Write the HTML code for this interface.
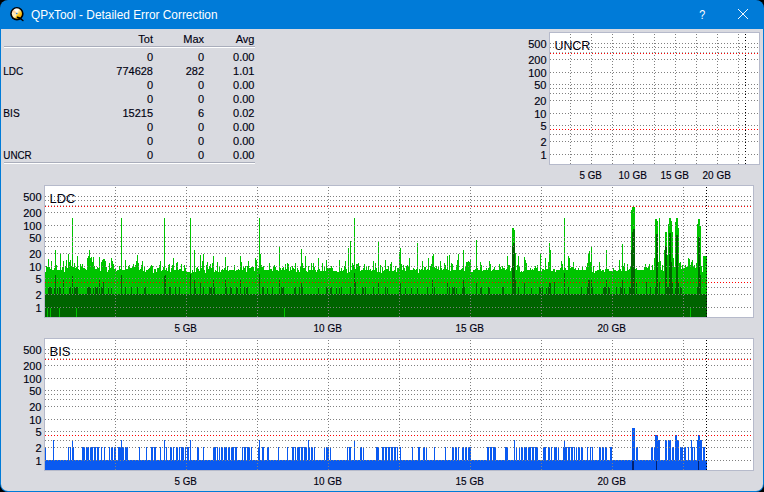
<!DOCTYPE html>
<html><head><meta charset="utf-8"><title>QPxTool - Detailed Error Correction</title>
<style>
html,body{margin:0;padding:0;background:#000;overflow:hidden}
svg{display:block}
text{font-family:"Liberation Sans",sans-serif;fill:#000010}
.t{font-size:11px;stroke:#000010;stroke-width:.15px}
.n{font-size:13px}
.w{font-size:12px;fill:#fff}
</style></head><body>
<svg width="764" height="492" viewBox="0 0 764 492">
<rect width="764" height="492" fill="#000"/>
<rect x="0" y="0" width="764" height="492" rx="8" ry="8" fill="#007bd8"/>
<path d="M1 29H763V484a7 7 0 0 1 -7 7H8a7 7 0 0 1 -7 -7z" fill="#d9dae0"/>

<g id="icon">
<defs><linearGradient id="cd" x1="0.15" y1="0.1" x2="0.85" y2="0.9"><stop offset="0" stop-color="#fff3e6"/><stop offset="0.45" stop-color="#ffe9a8"/><stop offset="0.7" stop-color="#ffc414"/><stop offset="1" stop-color="#f5a800"/></linearGradient></defs>
<circle cx="16.9" cy="13.7" r="6.7" fill="#000"/>
<circle cx="16.9" cy="13.6" r="5.1" fill="url(#cd)"/>
<path d="M16.9 13.6 L14.2 9.3 A5.1 5.1 0 0 1 19 9z" fill="#fff" opacity=".8"/>
<path d="M16.9 13.6 L12.6 16.3 A5.1 5.1 0 0 0 15.2 18.4z" fill="#fff" opacity=".45"/>
<path d="M16.9 13.6 L12 12.2 A5.1 5.1 0 0 1 13.5 9.8z" fill="#ffb070" opacity=".55"/>
<path d="M17.4 17.2 L19.6 18 L22.9 20.5" stroke="#000" stroke-width="1.5" stroke-linecap="round" stroke-linejoin="round" fill="none"/>
<ellipse cx="16.7" cy="13.5" rx="0.9" ry="0.7" fill="#2f86d8"/>
</g>
<text x="31" y="18.5" class="w" textLength="186.5" lengthAdjust="spacingAndGlyphs">QPxTool - Detailed Error Correction</text>
<text x="702.3" y="18.8" class="w" text-anchor="middle" style="font-size:13.5px" textLength="6" lengthAdjust="spacingAndGlyphs">?</text>
<path d="M738 9L748 19M748 9L738 19" stroke="#fff" stroke-width="1" fill="none" opacity=".95"/>

<g shape-rendering="crispEdges"><rect x="4" y="46" width="251" height="1" fill="#a9adbb"/><rect x="4" y="47" width="251" height="1" fill="#fff"/><rect x="4" y="162" width="251" height="1" fill="#a9adbb"/><rect x="4" y="163" width="251" height="1" fill="#fff"/></g>
<text x="153" y="43" text-anchor="end" class="t">Tot</text><text x="204" y="43" text-anchor="end" class="t">Max</text><text x="254.5" y="43" text-anchor="end" class="t">Avg</text>
<text x="153" y="61" text-anchor="end" class="t">0</text><text x="204" y="61" text-anchor="end" class="t">0</text><text x="254.5" y="61" text-anchor="end" class="t">0.00</text>
<text x="3.3" y="75" class="t" textLength="20" lengthAdjust="spacingAndGlyphs">LDC</text>
<text x="153" y="75" text-anchor="end" class="t">774628</text><text x="204" y="75" text-anchor="end" class="t">282</text><text x="254.5" y="75" text-anchor="end" class="t">1.01</text>
<text x="153" y="89" text-anchor="end" class="t">0</text><text x="204" y="89" text-anchor="end" class="t">0</text><text x="254.5" y="89" text-anchor="end" class="t">0.00</text>
<text x="153" y="103" text-anchor="end" class="t">0</text><text x="204" y="103" text-anchor="end" class="t">0</text><text x="254.5" y="103" text-anchor="end" class="t">0.00</text>
<text x="3.3" y="117" class="t" textLength="16.4" lengthAdjust="spacingAndGlyphs">BIS</text>
<text x="153" y="117" text-anchor="end" class="t">15215</text><text x="204" y="117" text-anchor="end" class="t">6</text><text x="254.5" y="117" text-anchor="end" class="t">0.02</text>
<text x="153" y="131" text-anchor="end" class="t">0</text><text x="204" y="131" text-anchor="end" class="t">0</text><text x="254.5" y="131" text-anchor="end" class="t">0.00</text>
<text x="153" y="145" text-anchor="end" class="t">0</text><text x="204" y="145" text-anchor="end" class="t">0</text><text x="254.5" y="145" text-anchor="end" class="t">0.00</text>
<text x="3.3" y="159" class="t" textLength="28.4" lengthAdjust="spacingAndGlyphs">UNCR</text>
<text x="153" y="159" text-anchor="end" class="t">0</text><text x="204" y="159" text-anchor="end" class="t">0</text><text x="254.5" y="159" text-anchor="end" class="t">0.00</text>
<rect x="549" y="32" width="211" height="133" fill="#b6bacb"/>
<rect x="550" y="33" width="209" height="131" fill="#fff"/>

<g shape-rendering="crispEdges" fill="none"><path d="M745.5 34V164" stroke="#000" stroke-dasharray="1 2"/><path d="M550 154.5H759" stroke="#808080" stroke-dasharray="1 2"/><path d="M550 141.5H759" stroke="#808080" stroke-dasharray="1 2"/><path d="M550 134.5H759" stroke="#808080" stroke-dasharray="1 2"/><path d="M550 125.5H759" stroke="#808080" stroke-dasharray="1 2"/><path d="M550 113.5H759" stroke="#808080" stroke-dasharray="1 2"/><path d="M550 100.5H759" stroke="#808080" stroke-dasharray="1 2"/><path d="M550 93.5H759" stroke="#808080" stroke-dasharray="1 2"/><path d="M550 88.5H759" stroke="#808080" stroke-dasharray="1 2"/><path d="M550 84.5H759" stroke="#808080" stroke-dasharray="1 2"/><path d="M550 72.5H759" stroke="#808080" stroke-dasharray="1 2"/><path d="M550 59.5H759" stroke="#808080" stroke-dasharray="1 2"/><path d="M550 47.5H759" stroke="#808080" stroke-dasharray="1 2"/><path d="M550 43.5H759" stroke="#808080" stroke-dasharray="1 2"/><path d="M550 52.5H759" stroke="#9fb5b5" stroke-dasharray="1 2"/><path d="M570.5 34V164" stroke="#808080" stroke-dasharray="1 2"/><path d="M591.5 34V164" stroke="#808080" stroke-dasharray="1 2"/><path d="M612.5 34V164" stroke="#808080" stroke-dasharray="1 2"/><path d="M633.5 34V164" stroke="#808080" stroke-dasharray="1 2"/><path d="M654.5 34V164" stroke="#808080" stroke-dasharray="1 2"/><path d="M675.5 34V164" stroke="#808080" stroke-dasharray="1 2"/><path d="M696.5 34V164" stroke="#808080" stroke-dasharray="1 2"/><path d="M717.5 34V164" stroke="#808080" stroke-dasharray="1 2"/><path d="M738.5 34V164" stroke="#808080" stroke-dasharray="1 2"/><path d="M550 129.5H759" stroke="#ff0000" stroke-dasharray="1 2"/><path d="M550 53.5H759" stroke="#ff0000" stroke-dasharray="1 2"/></g>
<text x="546.5" y="159" text-anchor="end" class="t">1</text>
<text x="546.5" y="146" text-anchor="end" class="t">2</text>
<text x="546.5" y="130" text-anchor="end" class="t">5</text>
<text x="546.5" y="118" text-anchor="end" class="t">10</text>
<text x="546.5" y="105" text-anchor="end" class="t">20</text>
<text x="546.5" y="89" text-anchor="end" class="t">50</text>
<text x="546.5" y="77" text-anchor="end" class="t">100</text>
<text x="546.5" y="64" text-anchor="end" class="t">200</text>
<text x="546.5" y="48" text-anchor="end" class="t">500</text>
<text x="590.7" y="179" text-anchor="middle" class="t" textLength="22.3" lengthAdjust="spacingAndGlyphs">5 GB</text>
<text x="632.7" y="179" text-anchor="middle" class="t" textLength="28.3" lengthAdjust="spacingAndGlyphs">10 GB</text>
<text x="674.7" y="179" text-anchor="middle" class="t" textLength="28.3" lengthAdjust="spacingAndGlyphs">15 GB</text>
<text x="716.7" y="179" text-anchor="middle" class="t" textLength="28.3" lengthAdjust="spacingAndGlyphs">20 GB</text>
<text x="554.5" y="50" class="n" textLength="35.6" lengthAdjust="spacingAndGlyphs">UNCR</text>
<rect x="44" y="185" width="710" height="133" fill="#b6bacb"/>
<rect x="45" y="186" width="708" height="131" fill="#fff"/>
<g shape-rendering="crispEdges"><path fill="#00c400" d="M45 272h1V317h-1zM46 266h1V317h-1zM47 267h1V317h-1zM48 259h1V317h-1zM49 267h1V317h-1zM50 269h1V317h-1zM51 261h1V317h-1zM52 270h2V317h-2zM54 268h1V317h-1zM55 250h1V317h-1zM56 265h1V317h-1zM57 270h3V317h-3zM60 254h1V317h-1zM61 270h1V317h-1zM62 267h1V317h-1zM63 261h1V317h-1zM64 272h1V317h-1zM65 266h1V317h-1zM66 260h1V317h-1zM67 268h1V317h-1zM68 254h1V317h-1zM69 262h1V317h-1zM70 260h1V317h-1zM71 266h1V317h-1zM72 218h1V317h-1zM73 267h1V317h-1zM74 263h1V317h-1zM75 268h1V317h-1zM76 267h1V317h-1zM77 256h1V317h-1zM78 269h1V317h-1zM79 270h1V317h-1zM80 264h1V317h-1zM81 266h1V317h-1zM82 264h1V317h-1zM83 268h2V317h-2zM85 269h1V317h-1zM86 270h1V317h-1zM87 258h1V317h-1zM88 256h1V317h-1zM89 250h1V317h-1zM90 258h1V317h-1zM91 257h1V317h-1zM92 262h1V317h-1zM93 257h1V317h-1zM94 266h1V317h-1zM95 269h2V317h-2zM97 267h1V317h-1zM98 268h1V317h-1zM99 257h1V317h-1zM100 271h1V317h-1zM101 262h1V317h-1zM102 260h1V317h-1zM103 259h2V317h-2zM105 261h1V317h-1zM106 267h1V317h-1zM107 272h1V317h-1zM108 270h1V317h-1zM109 263h1V317h-1zM110 268h1V317h-1zM111 258h1V317h-1zM112 261h1V317h-1zM113 264h1V317h-1zM114 269h2V317h-2zM116 271h1V317h-1zM117 270h2V317h-2zM119 266h1V317h-1zM120 269h1V317h-1zM121 218h1V317h-1zM122 270h3V317h-3zM125 260h1V317h-1zM126 269h2V317h-2zM128 266h1V317h-1zM129 265h1V317h-1zM130 268h2V317h-2zM132 266h1V317h-1zM133 264h1V317h-1zM134 267h1V317h-1zM135 265h1V317h-1zM136 261h1V317h-1zM137 255h1V317h-1zM138 263h1V317h-1zM139 270h1V317h-1zM140 269h1V317h-1zM141 265h1V317h-1zM142 261h1V317h-1zM143 271h1V317h-1zM144 267h1V317h-1zM145 272h1V317h-1zM146 270h2V317h-2zM148 269h1V317h-1zM149 268h1V317h-1zM150 266h1V317h-1zM151 265h1V317h-1zM152 266h1V317h-1zM153 273h1V317h-1zM154 269h2V317h-2zM156 272h1V317h-1zM157 268h2V317h-2zM159 265h1V317h-1zM160 261h1V317h-1zM161 271h1V317h-1zM162 270h1V317h-1zM163 267h1V317h-1zM164 218h1V317h-1zM165 270h1V317h-1zM166 268h1V317h-1zM167 271h1V317h-1zM168 265h1V317h-1zM169 264h1V317h-1zM170 272h1V317h-1zM171 268h1V317h-1zM172 265h1V317h-1zM173 258h1V317h-1zM174 270h2V317h-2zM176 263h1V317h-1zM177 262h1V317h-1zM178 270h1V317h-1zM179 269h2V317h-2zM181 264h1V317h-1zM182 271h2V317h-2zM184 265h1V317h-1zM185 268h1V317h-1zM186 271h1V317h-1zM187 272h3V317h-3zM190 218h1V317h-1zM191 273h1V317h-1zM192 270h1V317h-1zM193 272h1V317h-1zM194 250h1V317h-1zM195 272h1V317h-1zM196 268h1V317h-1zM197 267h1V317h-1zM198 269h1V317h-1zM199 271h1V317h-1zM200 255h1V317h-1zM201 268h1V317h-1zM202 261h1V317h-1zM203 254h1V317h-1zM204 270h1V317h-1zM205 273h1V317h-1zM206 265h1V317h-1zM207 262h1V317h-1zM208 269h1V317h-1zM209 266h1V317h-1zM210 264h1V317h-1zM211 268h1V317h-1zM212 263h1V317h-1zM213 256h1V317h-1zM214 272h1V317h-1zM215 270h1V317h-1zM216 271h1V317h-1zM217 262h1V317h-1zM218 272h1V317h-1zM219 267h1V317h-1zM220 272h1V317h-1zM221 270h1V317h-1zM222 269h1V317h-1zM223 270h1V317h-1zM224 268h1V317h-1zM225 257h1V317h-1zM226 270h1V317h-1zM227 266h1V317h-1zM228 271h1V317h-1zM229 270h5V317h-5zM234 265h1V317h-1zM235 271h1V317h-1zM236 270h2V317h-2zM238 269h1V317h-1zM239 270h1V317h-1zM240 256h1V317h-1zM241 262h1V317h-1zM242 270h1V317h-1zM243 267h1V317h-1zM244 268h1V317h-1zM245 266h1V317h-1zM246 272h1V317h-1zM247 266h1V317h-1zM248 261h1V317h-1zM249 268h2V317h-2zM251 267h1V317h-1zM252 266h1V317h-1zM253 267h1V317h-1zM254 271h1V317h-1zM255 258h1V317h-1zM256 260h1V317h-1zM257 269h1V317h-1zM258 268h1V317h-1zM259 218h1V317h-1zM260 254h1V317h-1zM261 265h1V317h-1zM262 267h1V317h-1zM263 266h1V317h-1zM264 270h5V317h-5zM269 263h1V317h-1zM270 269h2V317h-2zM272 271h1V317h-1zM273 267h1V317h-1zM274 265h1V317h-1zM275 267h1V317h-1zM276 270h2V317h-2zM278 271h1V317h-1zM279 246h1V317h-1zM280 268h1V317h-1zM281 270h1V317h-1zM282 268h1V317h-1zM283 267h1V317h-1zM284 270h1V317h-1zM285 264h1V317h-1zM286 269h1V317h-1zM287 263h1V317h-1zM288 264h1V317h-1zM289 271h1V317h-1zM290 267h1V317h-1zM291 270h1V317h-1zM292 266h1V317h-1zM293 268h1V317h-1zM294 269h1V317h-1zM295 263h1V317h-1zM296 272h1V317h-1zM297 268h1V317h-1zM298 270h1V317h-1zM299 272h1V317h-1zM300 266h1V317h-1zM301 249h1V317h-1zM302 263h1V317h-1zM303 268h2V317h-2zM305 256h1V317h-1zM306 271h1V317h-1zM307 272h1V317h-1zM308 266h1V317h-1zM309 270h2V317h-2zM311 263h1V317h-1zM312 270h1V317h-1zM313 263h1V317h-1zM314 267h1V317h-1zM315 270h1V317h-1zM316 272h1V317h-1zM317 270h1V317h-1zM318 258h1V317h-1zM319 269h1V317h-1zM320 271h2V317h-2zM322 263h1V317h-1zM323 271h1V317h-1zM324 266h1V317h-1zM325 271h1V317h-1zM326 260h1V317h-1zM327 268h4V317h-4zM331 266h1V317h-1zM332 268h1V317h-1zM333 271h4V317h-4zM337 272h2V317h-2zM339 260h1V317h-1zM340 271h1V317h-1zM341 268h1V317h-1zM342 271h1V317h-1zM343 270h1V317h-1zM344 266h1V317h-1zM345 261h1V317h-1zM346 269h1V317h-1zM347 273h1V317h-1zM348 248h1V317h-1zM349 272h1V317h-1zM350 241h1V317h-1zM351 270h1V317h-1zM352 263h1V317h-1zM353 265h1V317h-1zM354 218h1V317h-1zM355 269h1V317h-1zM356 264h2V317h-2zM358 263h1V317h-1zM359 266h1V317h-1zM360 271h1V317h-1zM361 270h2V317h-2zM363 268h1V317h-1zM364 264h1V317h-1zM365 270h1V317h-1zM366 267h1V317h-1zM367 270h1V317h-1zM368 266h1V317h-1zM369 270h1V317h-1zM370 269h1V317h-1zM371 271h1V317h-1zM372 270h1V317h-1zM373 261h1V317h-1zM374 270h1V317h-1zM375 263h1V317h-1zM376 268h1V317h-1zM377 272h1V317h-1zM378 241h1V317h-1zM379 272h1V317h-1zM380 265h1V317h-1zM381 273h1V317h-1zM382 267h1V317h-1zM383 271h1V317h-1zM384 270h1V317h-1zM385 260h1V317h-1zM386 269h2V317h-2zM388 266h1V317h-1zM389 271h1V317h-1zM390 264h1V317h-1zM391 262h1V317h-1zM392 271h2V317h-2zM394 270h1V317h-1zM395 266h1V317h-1zM396 272h1V317h-1zM397 268h2V317h-2zM399 252h1V317h-1zM400 248h1V317h-1zM401 264h1V317h-1zM402 270h1V317h-1zM403 265h1V317h-1zM404 268h1V317h-1zM405 271h1V317h-1zM406 266h1V317h-1zM407 265h1V317h-1zM408 267h1V317h-1zM409 258h1V317h-1zM410 270h3V317h-3zM413 268h1V317h-1zM414 269h1V317h-1zM415 270h1V317h-1zM416 269h1V317h-1zM417 243h1V317h-1zM418 273h1V317h-1zM419 269h1V317h-1zM420 270h1V317h-1zM421 269h1V317h-1zM422 261h1V317h-1zM423 270h1V317h-1zM424 267h2V317h-2zM426 270h1V317h-1zM427 269h1V317h-1zM428 258h1V317h-1zM429 270h1V317h-1zM430 266h1V317h-1zM431 264h1V317h-1zM432 256h1V317h-1zM433 254h1V317h-1zM434 267h1V317h-1zM435 268h1V317h-1zM436 266h1V317h-1zM437 269h1V317h-1zM438 266h1V317h-1zM439 270h1V317h-1zM440 261h1V317h-1zM441 268h1V317h-1zM442 270h1V317h-1zM443 269h1V317h-1zM444 263h1V317h-1zM445 265h1V317h-1zM446 269h1V317h-1zM447 256h1V317h-1zM448 270h1V317h-1zM449 255h1V317h-1zM450 271h1V317h-1zM451 263h1V317h-1zM452 264h1V317h-1zM453 270h3V317h-3zM456 265h1V317h-1zM457 260h1V317h-1zM458 254h1V317h-1zM459 270h2V317h-2zM461 269h1V317h-1zM462 268h1V317h-1zM463 250h1V317h-1zM464 271h1V317h-1zM465 267h1V317h-1zM466 262h2V317h-2zM468 261h1V317h-1zM469 262h1V317h-1zM470 260h1V317h-1zM471 272h2V317h-2zM473 270h2V317h-2zM475 269h1V317h-1zM476 240h1V317h-1zM477 268h1V317h-1zM478 270h2V317h-2zM480 262h1V317h-1zM481 265h1V317h-1zM482 271h1V317h-1zM483 270h3V317h-3zM486 268h1V317h-1zM487 270h1V317h-1zM488 268h1V317h-1zM489 261h1V317h-1zM490 264h1V317h-1zM491 271h1V317h-1zM492 270h1V317h-1zM493 269h1V317h-1zM494 267h1V317h-1zM495 270h4V317h-4zM499 264h1V317h-1zM500 267h1V317h-1zM501 269h1V317h-1zM502 266h1V317h-1zM503 268h2V317h-2zM505 270h1V317h-1zM506 269h1V317h-1zM507 256h1V317h-1zM508 265h2V317h-2zM510 271h1V317h-1zM511 268h1V317h-1zM512 228h2V317h-2zM514 230h1V317h-1zM515 253h1V317h-1zM516 270h1V317h-1zM517 265h1V317h-1zM518 256h1V317h-1zM519 267h1V317h-1zM520 272h1V317h-1zM521 271h1V317h-1zM522 272h1V317h-1zM523 271h1V317h-1zM524 257h1V317h-1zM525 260h1V317h-1zM526 263h1V317h-1zM527 270h3V317h-3zM530 268h1V317h-1zM531 270h1V317h-1zM532 269h1V317h-1zM533 270h1V317h-1zM534 268h1V317h-1zM535 266h1V317h-1zM536 268h1V317h-1zM537 265h1V317h-1zM538 271h2V317h-2zM540 254h1V317h-1zM541 271h1V317h-1zM542 269h2V317h-2zM544 270h1V317h-1zM545 258h1V317h-1zM546 269h2V317h-2zM548 262h1V317h-1zM549 243h1V317h-1zM550 250h1V317h-1zM551 271h2V317h-2zM553 269h2V317h-2zM555 272h1V317h-1zM556 270h4V317h-4zM560 268h1V317h-1zM561 261h1V317h-1zM562 264h1V317h-1zM563 270h1V317h-1zM564 218h1V317h-1zM565 268h1V317h-1zM566 270h2V317h-2zM568 256h1V317h-1zM569 258h1V317h-1zM570 268h1V317h-1zM571 267h2V317h-2zM573 262h1V317h-1zM574 269h1V317h-1zM575 268h1V317h-1zM576 270h2V317h-2zM578 268h1V317h-1zM579 270h3V317h-3zM582 266h1V317h-1zM583 270h3V317h-3zM586 267h1V317h-1zM587 263h1V317h-1zM588 254h1V317h-1zM589 251h1V317h-1zM590 262h1V317h-1zM591 246h1V317h-1zM592 272h1V317h-1zM593 266h1V317h-1zM594 273h1V317h-1zM595 271h2V317h-2zM597 270h2V317h-2zM599 262h1V317h-1zM600 269h1V317h-1zM601 271h1V317h-1zM602 270h2V317h-2zM604 272h1V317h-1zM605 269h1V317h-1zM606 250h1V317h-1zM607 269h2V317h-2zM609 271h4V317h-4zM613 268h1V317h-1zM614 270h2V317h-2zM616 271h2V317h-2zM618 270h1V317h-1zM619 260h1V317h-1zM620 269h1V317h-1zM621 271h1V317h-1zM622 244h1V317h-1zM623 266h1V317h-1zM624 263h1V317h-1zM625 271h2V317h-2zM627 264h1V317h-1zM628 270h1V317h-1zM629 269h1V317h-1zM630 267h1V317h-1zM631 210h1V317h-1zM632 207h3V317h-3zM635 269h1V317h-1zM636 268h1V317h-1zM637 270h7V317h-7zM644 267h1V317h-1zM645 264h1V317h-1zM646 267h1V317h-1zM647 268h1V317h-1zM648 267h1V317h-1zM649 264h1V317h-1zM650 270h2V317h-2zM652 265h1V317h-1zM653 270h1V317h-1zM654 258h1V317h-1zM655 219h2V317h-2zM657 221h1V317h-1zM658 262h1V317h-1zM659 218h1V317h-1zM660 261h1V317h-1zM661 270h1V317h-1zM662 265h1V317h-1zM663 271h1V317h-1zM664 250h1V317h-1zM665 232h2V317h-2zM667 255h1V317h-1zM668 224h1V317h-1zM669 218h2V317h-2zM671 221h1V317h-1zM672 232h1V317h-1zM673 258h1V317h-1zM674 267h1V317h-1zM675 222h1V317h-1zM676 218h2V317h-2zM678 228h1V317h-1zM679 263h1V317h-1zM680 262h1V317h-1zM681 269h1V317h-1zM682 265h1V317h-1zM683 268h2V317h-2zM685 265h1V317h-1zM686 267h1V317h-1zM687 266h1V317h-1zM688 258h1V317h-1zM689 259h1V317h-1zM690 265h1V317h-1zM691 262h1V317h-1zM692 260h1V317h-1zM693 266h1V317h-1zM694 265h1V317h-1zM695 268h1V317h-1zM696 263h1V317h-1zM697 224h1V317h-1zM698 219h2V317h-2zM700 226h1V317h-1zM701 266h1V317h-1zM702 272h1V317h-1zM703 256h4V317h-4z"/><path fill="#006400" d="M45 294h3V317h-3zM48 287h4V317h-4zM52 294h2V317h-2zM54 287h1V317h-1zM55 275h1V317h-1zM56 294h1V317h-1zM57 287h1V317h-1zM58 294h1V317h-1zM59 287h2V317h-2zM61 294h2V317h-2zM63 280h1V317h-1zM64 294h5V317h-5zM69 287h2V317h-2zM71 294h1V317h-1zM72 276h1V317h-1zM73 294h1V317h-1zM74 287h4V317h-4zM78 294h9V317h-9zM87 287h4V317h-4zM91 294h2V317h-2zM93 287h1V317h-1zM94 294h1V317h-1zM95 287h3V317h-3zM98 294h1V317h-1zM99 280h1V317h-1zM100 294h1V317h-1zM101 287h2V317h-2zM103 282h1V317h-1zM104 294h4V317h-4zM108 287h1V317h-1zM109 294h2V317h-2zM111 287h1V317h-1zM112 294h9V317h-9zM121 275h1V317h-1zM122 294h3V317h-3zM125 287h1V317h-1zM126 294h5V317h-5zM131 287h1V317h-1zM132 294h5V317h-5zM137 287h1V317h-1zM138 294h6V317h-6zM144 287h2V317h-2zM146 294h18V317h-18zM164 276h1V317h-1zM165 275h1V317h-1zM166 294h3V317h-3zM169 287h2V317h-2zM171 294h4V317h-4zM175 287h1V317h-1zM176 294h3V317h-3zM179 287h1V317h-1zM180 294h10V317h-10zM190 274h1V317h-1zM191 294h3V317h-3zM194 280h1V317h-1zM195 287h1V317h-1zM196 294h4V317h-4zM200 283h1V317h-1zM201 294h2V317h-2zM203 287h1V317h-1zM204 294h5V317h-5zM209 287h3V317h-3zM212 294h1V317h-1zM213 280h1V317h-1zM214 287h1V317h-1zM215 294h10V317h-10zM225 280h1V317h-1zM226 287h1V317h-1zM227 294h3V317h-3zM230 287h2V317h-2zM232 294h4V317h-4zM236 287h2V317h-2zM238 294h2V317h-2zM240 280h1V317h-1zM241 294h3V317h-3zM244 287h1V317h-1zM245 294h1V317h-1zM246 287h2V317h-2zM248 294h11V317h-11zM259 274h1V317h-1zM260 294h2V317h-2zM262 287h2V317h-2zM264 294h3V317h-3zM267 287h1V317h-1zM268 294h4V317h-4zM272 287h1V317h-1zM273 294h6V317h-6zM279 280h1V317h-1zM280 294h1V317h-1zM281 287h3V317h-3zM284 294h10V317h-10zM294 287h2V317h-2zM296 294h3V317h-3zM299 287h1V317h-1zM300 294h1V317h-1zM301 283h1V317h-1zM302 287h1V317h-1zM303 294h15V317h-15zM318 287h1V317h-1zM319 294h7V317h-7zM326 287h2V317h-2zM328 294h2V317h-2zM330 287h2V317h-2zM332 294h4V317h-4zM336 287h1V317h-1zM337 294h2V317h-2zM339 287h1V317h-1zM340 294h1V317h-1zM341 287h1V317h-1zM342 294h8V317h-8zM350 287h1V317h-1zM351 294h3V317h-3zM354 273h1V317h-1zM355 282h1V317h-1zM356 294h6V317h-6zM362 287h2V317h-2zM364 294h1V317h-1zM365 287h1V317h-1zM366 294h7V317h-7zM373 287h1V317h-1zM374 294h4V317h-4zM378 283h1V317h-1zM379 294h6V317h-6zM385 287h1V317h-1zM386 294h1V317h-1zM387 287h1V317h-1zM388 294h11V317h-11zM399 287h1V317h-1zM400 283h1V317h-1zM401 294h4V317h-4zM405 287h1V317h-1zM406 294h5V317h-5zM411 287h1V317h-1zM412 294h5V317h-5zM417 287h1V317h-1zM418 294h9V317h-9zM427 287h1V317h-1zM428 294h4V317h-4zM432 280h1V317h-1zM433 294h1V317h-1zM434 287h1V317h-1zM435 294h12V317h-12zM447 283h1V317h-1zM448 294h1V317h-1zM449 287h1V317h-1zM450 294h2V317h-2zM452 287h3V317h-3zM455 294h1V317h-1zM456 287h1V317h-1zM457 294h5V317h-5zM462 287h1V317h-1zM463 280h1V317h-1zM464 287h1V317h-1zM465 294h11V317h-11zM476 283h1V317h-1zM477 294h3V317h-3zM480 287h2V317h-2zM482 294h6V317h-6zM488 287h2V317h-2zM490 294h12V317h-12zM502 287h2V317h-2zM504 294h8V317h-8zM512 246h1V317h-1zM513 243h2V317h-2zM515 280h1V317h-1zM516 294h2V317h-2zM518 287h1V317h-1zM519 294h5V317h-5zM524 283h1V317h-1zM525 294h6V317h-6zM531 287h1V317h-1zM532 294h7V317h-7zM539 287h2V317h-2zM541 294h1V317h-1zM542 287h1V317h-1zM543 294h3V317h-3zM546 287h1V317h-1zM547 294h1V317h-1zM548 287h1V317h-1zM549 283h2V317h-2zM551 294h3V317h-3zM554 282h1V317h-1zM555 294h9V317h-9zM564 273h1V317h-1zM565 294h3V317h-3zM568 287h1V317h-1zM569 294h12V317h-12zM581 287h1V317h-1zM582 294h5V317h-5zM587 287h1V317h-1zM588 280h2V317h-2zM590 294h1V317h-1zM591 280h1V317h-1zM592 287h1V317h-1zM593 294h10V317h-10zM603 287h3V317h-3zM606 280h1V317h-1zM607 294h1V317h-1zM608 287h2V317h-2zM610 294h6V317h-6zM616 287h1V317h-1zM617 294h3V317h-3zM620 287h2V317h-2zM622 280h1V317h-1zM623 294h1V317h-1zM624 287h1V317h-1zM625 294h4V317h-4zM629 287h2V317h-2zM631 250h1V317h-1zM632 232h1V317h-1zM633 229h2V317h-2zM635 294h1V317h-1zM636 282h1V317h-1zM637 294h9V317h-9zM646 282h1V317h-1zM647 294h3V317h-3zM650 287h1V317h-1zM651 294h4V317h-4zM655 287h1V317h-1zM656 234h2V317h-2zM658 294h1V317h-1zM659 282h1V317h-1zM660 294h5V317h-5zM665 246h2V317h-2zM667 287h2V317h-2zM669 233h2V317h-2zM671 262h1V317h-1zM672 282h1V317h-1zM673 294h2V317h-2zM675 287h1V317h-1zM676 235h2V317h-2zM678 282h1V317h-1zM679 294h1V317h-1zM680 287h2V317h-2zM682 294h15V317h-15zM697 287h1V317h-1zM698 237h2V317h-2zM700 275h1V317h-1zM701 294h6V317h-6z"/><path fill="#00c400" d="M47 308h1V317h-1zM50 308h1V317h-1zM59 308h1V317h-1zM76 308h1V317h-1zM284 308h1V317h-1zM690 308h1V317h-1z"/></g>
<g shape-rendering="crispEdges" fill="none"><path d="M706.5 187V317" stroke="#000" stroke-dasharray="1 2"/><path d="M45 307.5H753" stroke="#808080" stroke-dasharray="1 2"/><path d="M45 294.5H753" stroke="#808080" stroke-dasharray="1 2"/><path d="M45 287.5H753" stroke="#808080" stroke-dasharray="1 2"/><path d="M45 278.5H753" stroke="#808080" stroke-dasharray="1 2"/><path d="M45 266.5H753" stroke="#808080" stroke-dasharray="1 2"/><path d="M45 253.5H753" stroke="#808080" stroke-dasharray="1 2"/><path d="M45 246.5H753" stroke="#808080" stroke-dasharray="1 2"/><path d="M45 241.5H753" stroke="#808080" stroke-dasharray="1 2"/><path d="M45 237.5H753" stroke="#808080" stroke-dasharray="1 2"/><path d="M45 225.5H753" stroke="#808080" stroke-dasharray="1 2"/><path d="M45 212.5H753" stroke="#808080" stroke-dasharray="1 2"/><path d="M45 200.5H753" stroke="#808080" stroke-dasharray="1 2"/><path d="M45 196.5H753" stroke="#808080" stroke-dasharray="1 2"/><path d="M45 205.5H753" stroke="#9fb5b5" stroke-dasharray="1 2"/><path d="M115.5 187V317" stroke="#808080" stroke-dasharray="1 2"/><path d="M186.5 187V317" stroke="#808080" stroke-dasharray="1 2"/><path d="M257.5 187V317" stroke="#808080" stroke-dasharray="1 2"/><path d="M328.5 187V317" stroke="#808080" stroke-dasharray="1 2"/><path d="M399.5 187V317" stroke="#808080" stroke-dasharray="1 2"/><path d="M470.5 187V317" stroke="#808080" stroke-dasharray="1 2"/><path d="M541.5 187V317" stroke="#808080" stroke-dasharray="1 2"/><path d="M612.5 187V317" stroke="#808080" stroke-dasharray="1 2"/><path d="M683.5 187V317" stroke="#808080" stroke-dasharray="1 2"/><path d="M45 282.5H753" stroke="#ff0000" stroke-dasharray="1 2"/><path d="M45 206.5H753" stroke="#ff0000" stroke-dasharray="1 2"/></g>
<text x="41.5" y="312" text-anchor="end" class="t">1</text>
<text x="41.5" y="299" text-anchor="end" class="t">2</text>
<text x="41.5" y="283" text-anchor="end" class="t">5</text>
<text x="41.5" y="271" text-anchor="end" class="t">10</text>
<text x="41.5" y="258" text-anchor="end" class="t">20</text>
<text x="41.5" y="242" text-anchor="end" class="t">50</text>
<text x="41.5" y="230" text-anchor="end" class="t">100</text>
<text x="41.5" y="217" text-anchor="end" class="t">200</text>
<text x="41.5" y="201" text-anchor="end" class="t">500</text>
<text x="185.7" y="332" text-anchor="middle" class="t" textLength="22.3" lengthAdjust="spacingAndGlyphs">5 GB</text>
<text x="327.7" y="332" text-anchor="middle" class="t" textLength="28.3" lengthAdjust="spacingAndGlyphs">10 GB</text>
<text x="469.7" y="332" text-anchor="middle" class="t" textLength="28.3" lengthAdjust="spacingAndGlyphs">15 GB</text>
<text x="611.7" y="332" text-anchor="middle" class="t" textLength="28.3" lengthAdjust="spacingAndGlyphs">20 GB</text>
<text x="49.5" y="203" class="n">LDC</text>
<rect x="44" y="338" width="710" height="133" fill="#b6bacb"/>
<rect x="45" y="339" width="708" height="131" fill="#fff"/>
<g shape-rendering="crispEdges"><path fill="#0a5af0" d="M45 447h1V470h-1zM46 460h7V470h-7zM53 440h1V470h-1zM54 460h14V470h-14zM68 447h1V470h-1zM69 460h1V470h-1zM70 447h1V470h-1zM71 460h1V470h-1zM72 440h1V470h-1zM73 447h1V470h-1zM74 460h8V470h-8zM82 447h3V470h-3zM85 460h1V470h-1zM86 447h3V470h-3zM89 460h1V470h-1zM90 447h3V470h-3zM93 460h1V470h-1zM94 447h2V470h-2zM96 460h1V470h-1zM97 447h2V470h-2zM99 460h2V470h-2zM101 447h1V470h-1zM102 460h2V470h-2zM104 447h1V470h-1zM105 460h4V470h-4zM109 447h1V470h-1zM110 460h1V470h-1zM111 447h2V470h-2zM113 460h1V470h-1zM114 447h2V470h-2zM116 460h2V470h-2zM118 447h3V470h-3zM121 440h1V470h-1zM122 447h2V470h-2zM124 460h1V470h-1zM125 447h3V470h-3zM128 460h11V470h-11zM139 447h1V470h-1zM140 460h6V470h-6zM146 447h1V470h-1zM147 460h4V470h-4zM151 447h2V470h-2zM153 460h1V470h-1zM154 447h2V470h-2zM156 460h4V470h-4zM160 447h1V470h-1zM161 460h3V470h-3zM164 440h1V470h-1zM165 460h1V470h-1zM166 447h1V470h-1zM167 460h3V470h-3zM170 447h2V470h-2zM172 460h1V470h-1zM173 447h1V470h-1zM174 460h2V470h-2zM176 447h2V470h-2zM178 460h1V470h-1zM179 447h1V470h-1zM180 460h1V470h-1zM181 447h3V470h-3zM184 460h1V470h-1zM185 447h1V470h-1zM186 460h1V470h-1zM187 447h2V470h-2zM189 460h1V470h-1zM190 440h1V470h-1zM191 460h6V470h-6zM197 447h2V470h-2zM199 460h4V470h-4zM203 447h1V470h-1zM204 460h9V470h-9zM213 447h3V470h-3zM216 460h1V470h-1zM217 447h1V470h-1zM218 460h1V470h-1zM219 447h1V470h-1zM220 460h1V470h-1zM221 447h2V470h-2zM223 460h1V470h-1zM224 447h3V470h-3zM227 460h1V470h-1zM228 447h2V470h-2zM230 460h1V470h-1zM231 447h3V470h-3zM234 460h1V470h-1zM235 447h2V470h-2zM237 460h5V470h-5zM242 447h1V470h-1zM243 460h1V470h-1zM244 447h2V470h-2zM246 460h1V470h-1zM247 447h3V470h-3zM250 460h1V470h-1zM251 447h1V470h-1zM252 460h6V470h-6zM258 447h1V470h-1zM259 440h1V470h-1zM260 460h2V470h-2zM262 447h2V470h-2zM264 460h3V470h-3zM267 447h2V470h-2zM269 460h9V470h-9zM278 447h1V470h-1zM279 460h8V470h-8zM287 447h1V470h-1zM288 460h4V470h-4zM292 447h2V470h-2zM294 460h1V470h-1zM295 447h1V470h-1zM296 460h1V470h-1zM297 447h3V470h-3zM300 460h1V470h-1zM301 447h2V470h-2zM303 460h1V470h-1zM304 447h3V470h-3zM307 460h1V470h-1zM308 440h1V470h-1zM309 447h1V470h-1zM310 460h1V470h-1zM311 447h2V470h-2zM313 460h1V470h-1zM314 447h1V470h-1zM315 460h9V470h-9zM324 447h1V470h-1zM325 460h1V470h-1zM326 447h3V470h-3zM329 460h1V470h-1zM330 447h1V470h-1zM331 460h16V470h-16zM347 447h1V470h-1zM348 460h1V470h-1zM349 447h2V470h-2zM351 460h3V470h-3zM354 440h1V470h-1zM355 460h5V470h-5zM360 447h2V470h-2zM362 460h1V470h-1zM363 447h1V470h-1zM364 460h12V470h-12zM376 447h3V470h-3zM379 460h3V470h-3zM382 447h2V470h-2zM384 460h1V470h-1zM385 447h2V470h-2zM387 460h1V470h-1zM388 447h2V470h-2zM390 460h1V470h-1zM391 447h2V470h-2zM393 460h1V470h-1zM394 447h2V470h-2zM396 460h1V470h-1zM397 447h1V470h-1zM398 460h2V470h-2zM400 447h1V470h-1zM401 460h11V470h-11zM412 447h1V470h-1zM413 460h5V470h-5zM418 447h2V470h-2zM420 460h3V470h-3zM423 447h2V470h-2zM425 460h1V470h-1zM426 447h1V470h-1zM427 460h7V470h-7zM434 447h1V470h-1zM435 460h10V470h-10zM445 447h1V470h-1zM446 460h6V470h-6zM452 447h2V470h-2zM454 460h1V470h-1zM455 447h2V470h-2zM457 460h1V470h-1zM458 447h1V470h-1zM459 460h3V470h-3zM462 447h2V470h-2zM464 460h1V470h-1zM465 447h2V470h-2zM467 460h1V470h-1zM468 447h3V470h-3zM471 460h16V470h-16zM487 447h2V470h-2zM489 460h1V470h-1zM490 447h2V470h-2zM492 460h1V470h-1zM493 447h3V470h-3zM496 460h9V470h-9zM505 447h3V470h-3zM508 460h6V470h-6zM514 440h1V470h-1zM515 460h1V470h-1zM516 447h1V470h-1zM517 460h2V470h-2zM519 447h1V470h-1zM520 460h1V470h-1zM521 447h2V470h-2zM523 460h1V470h-1zM524 447h3V470h-3zM527 460h1V470h-1zM528 447h3V470h-3zM531 460h1V470h-1zM532 447h2V470h-2zM534 460h1V470h-1zM535 447h3V470h-3zM538 460h5V470h-5zM543 447h3V470h-3zM546 460h2V470h-2zM548 447h2V470h-2zM550 460h1V470h-1zM551 447h1V470h-1zM552 460h2V470h-2zM554 447h3V470h-3zM557 460h1V470h-1zM558 447h1V470h-1zM559 460h4V470h-4zM563 447h1V470h-1zM564 440h1V470h-1zM565 447h2V470h-2zM567 460h1V470h-1zM568 447h2V470h-2zM570 460h1V470h-1zM571 447h2V470h-2zM573 460h1V470h-1zM574 447h1V470h-1zM575 460h1V470h-1zM576 447h1V470h-1zM577 460h1V470h-1zM578 447h2V470h-2zM580 460h1V470h-1zM581 447h2V470h-2zM583 460h4V470h-4zM587 447h1V470h-1zM588 460h2V470h-2zM590 447h1V470h-1zM591 460h1V470h-1zM592 447h1V470h-1zM593 460h6V470h-6zM599 447h2V470h-2zM601 460h1V470h-1zM602 447h2V470h-2zM604 460h1V470h-1zM605 447h2V470h-2zM607 460h3V470h-3zM610 447h2V470h-2zM612 460h20V470h-20zM632 428h3V470h-3zM635 460h1V470h-1zM636 447h2V470h-2zM638 460h13V470h-13zM651 447h2V470h-2zM653 460h1V470h-1zM654 447h1V470h-1zM655 435h3V470h-3zM658 440h2V470h-2zM660 460h5V470h-5zM665 440h2V470h-2zM667 460h1V470h-1zM668 440h3V470h-3zM671 460h1V470h-1zM672 447h2V470h-2zM674 460h1V470h-1zM675 435h2V470h-2zM677 440h2V470h-2zM679 460h1V470h-1zM680 447h3V470h-3zM683 460h1V470h-1zM684 447h2V470h-2zM686 460h2V470h-2zM688 447h1V470h-1zM689 460h2V470h-2zM691 440h1V470h-1zM692 447h1V470h-1zM693 460h1V470h-1zM694 447h1V470h-1zM695 460h2V470h-2zM697 440h1V470h-1zM698 435h2V470h-2zM700 440h2V470h-2zM702 460h1V470h-1zM703 447h2V470h-2zM705 460h2V470h-2z"/><path fill="#002070" d="M632 461h2V470h-2zM656 461h1V470h-1zM698 461h1V470h-1z"/></g>
<g shape-rendering="crispEdges" fill="none"><path d="M706.5 340V470" stroke="#000" stroke-dasharray="1 2"/><path d="M45 460.5H753" stroke="#808080" stroke-dasharray="1 2"/><path d="M45 447.5H753" stroke="#808080" stroke-dasharray="1 2"/><path d="M45 440.5H753" stroke="#808080" stroke-dasharray="1 2"/><path d="M45 431.5H753" stroke="#808080" stroke-dasharray="1 2"/><path d="M45 419.5H753" stroke="#808080" stroke-dasharray="1 2"/><path d="M45 406.5H753" stroke="#808080" stroke-dasharray="1 2"/><path d="M45 399.5H753" stroke="#808080" stroke-dasharray="1 2"/><path d="M45 394.5H753" stroke="#808080" stroke-dasharray="1 2"/><path d="M45 390.5H753" stroke="#808080" stroke-dasharray="1 2"/><path d="M45 378.5H753" stroke="#808080" stroke-dasharray="1 2"/><path d="M45 365.5H753" stroke="#808080" stroke-dasharray="1 2"/><path d="M45 353.5H753" stroke="#808080" stroke-dasharray="1 2"/><path d="M45 349.5H753" stroke="#808080" stroke-dasharray="1 2"/><path d="M45 358.5H753" stroke="#9fb5b5" stroke-dasharray="1 2"/><path d="M115.5 340V470" stroke="#808080" stroke-dasharray="1 2"/><path d="M186.5 340V470" stroke="#808080" stroke-dasharray="1 2"/><path d="M257.5 340V470" stroke="#808080" stroke-dasharray="1 2"/><path d="M328.5 340V470" stroke="#808080" stroke-dasharray="1 2"/><path d="M399.5 340V470" stroke="#808080" stroke-dasharray="1 2"/><path d="M470.5 340V470" stroke="#808080" stroke-dasharray="1 2"/><path d="M541.5 340V470" stroke="#808080" stroke-dasharray="1 2"/><path d="M612.5 340V470" stroke="#808080" stroke-dasharray="1 2"/><path d="M683.5 340V470" stroke="#808080" stroke-dasharray="1 2"/><path d="M45 435.5H753" stroke="#ff0000" stroke-dasharray="1 2"/><path d="M45 359.5H753" stroke="#ff0000" stroke-dasharray="1 2"/></g>
<text x="41.5" y="465" text-anchor="end" class="t">1</text>
<text x="41.5" y="452" text-anchor="end" class="t">2</text>
<text x="41.5" y="436" text-anchor="end" class="t">5</text>
<text x="41.5" y="424" text-anchor="end" class="t">10</text>
<text x="41.5" y="411" text-anchor="end" class="t">20</text>
<text x="41.5" y="395" text-anchor="end" class="t">50</text>
<text x="41.5" y="383" text-anchor="end" class="t">100</text>
<text x="41.5" y="370" text-anchor="end" class="t">200</text>
<text x="41.5" y="354" text-anchor="end" class="t">500</text>
<text x="185.7" y="485" text-anchor="middle" class="t" textLength="22.3" lengthAdjust="spacingAndGlyphs">5 GB</text>
<text x="327.7" y="485" text-anchor="middle" class="t" textLength="28.3" lengthAdjust="spacingAndGlyphs">10 GB</text>
<text x="469.7" y="485" text-anchor="middle" class="t" textLength="28.3" lengthAdjust="spacingAndGlyphs">15 GB</text>
<text x="611.7" y="485" text-anchor="middle" class="t" textLength="28.3" lengthAdjust="spacingAndGlyphs">20 GB</text>
<text x="49.5" y="356" class="n">BIS</text>
</svg></body></html>
